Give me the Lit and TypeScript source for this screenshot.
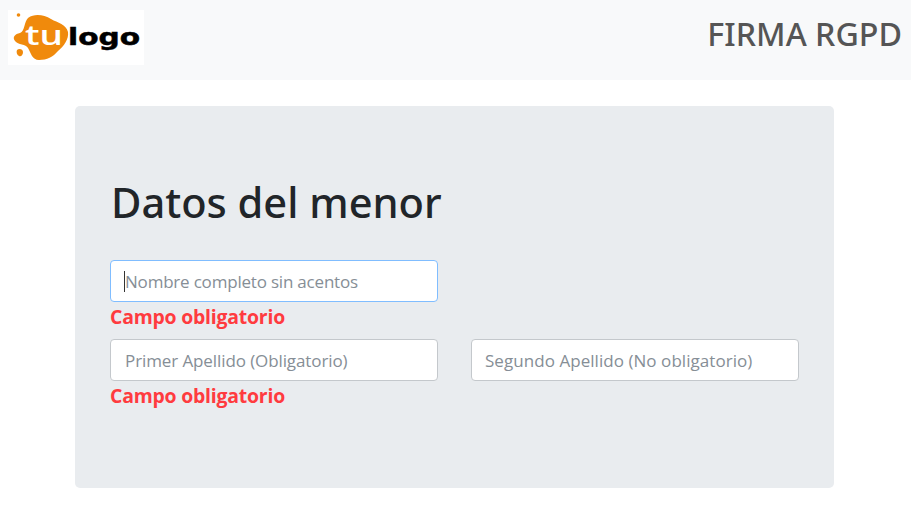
import { LitElement, html, css } from "lit";
import { customElement } from "lit/decorators.js";

@customElement("app-root")
export class AppRoot extends LitElement {
  static styles = css`
    :host { display: block; font-family: "Open Sans", "Noto Sans", sans-serif; background: #fff; min-height: 522px; color: #212529; }
    * { box-sizing: border-box; }
    .nav { height: 80px; background: #f8f9fa; display: flex; align-items: center; justify-content: space-between; padding: 0 9px 0 8px; }
    .logo { display: block; width: 136px; height: 55px; background: #fff; margin-top: -5px; }
    .brand { font-family: "Noto Sans", sans-serif; font-size: 32.2px; font-weight: 500; color: #555; margin: 0 0 11px; line-height: 1.2; }
    .jumbo { width: 759px; height: 382px; margin: 26px 0 0 75px; background: #e9ecef; border-radius: 5px; padding: 69px 35px 0; }
    h1 { font-family: "Noto Sans", sans-serif; margin: 0 0 31px 1px; font-size: 41.6px; font-weight: 500; line-height: 54px; }
    .row { display: grid; grid-template-columns: 328px 328px; column-gap: 33px; }
    .field { position: relative; height: 42px; }
    input { display: block; width: 100%; height: 42px; padding: 0 14px; font: 400 17px "Open Sans", sans-serif; letter-spacing: -0.2px; color: #495057; background: #fff; border: 1px solid #c4c8cc; border-radius: 4px; outline: none; }
    input.mid { letter-spacing: -0.1px; }
    input.wide { letter-spacing: 0.05px; padding-left: 13px; }
    input::placeholder { color: #868e96; opacity: 1; }
    input.focus { border-color: #80bdff; }
    .caret { position: absolute; left: 14px; top: 11px; width: 1px; height: 21px; background: #333; }
    .err { color: #ff3b3f; font-size: 19.4px; font-weight: 700; line-height: 30px; height: 37px; letter-spacing: -0.2px; }
    .tu { font-family: "Open Sans", sans-serif; font-weight: 600; }
    .lg { font-family: "DejaVu Sans", sans-serif; font-weight: 700; }
  `;

  render() {
    return html`
      <div class="nav">
        <svg class="logo" viewBox="0 0 136 55" role="img" aria-label="tu logo">
          <path fill="#f08a0c" d="M20 8 C27 3 36 5 43 9 C50 13 58 14 60 22 C61 29 56 36 50 41 C45 47 39 50 31 50 C24 50 23 43 20 38 C18 34 10 35 7 31 C4 27 7 24 12 23 C17 21 16 12 20 8 Z"/>
          <circle cx="10.5" cy="5" r="1.8" fill="#f08a0c"/>
          <path fill="#f08a0c" d="M9 40 C11 38 15 39 15 42 C15 45 13 47 11 46 C9 45 8 42 9 40 Z"/>
          <text class="tu" x="17" y="35" font-size="27" fill="#fff" textLength="38" lengthAdjust="spacingAndGlyphs">tu</text>
          <text class="lg" x="60" y="35" font-size="23" fill="#000" stroke="#000" stroke-width="0.5" textLength="72" lengthAdjust="spacingAndGlyphs">logo</text>
        </svg>
        <p class="brand">FIRMA RGPD</p>
      </div>
      <div class="jumbo">
        <h1>Datos del menor</h1>
        <div class="row">
          <div>
            <div class="field">
              <input class="focus" placeholder="Nombre completo sin acentos" />
              <span class="caret"></span>
            </div>
            <div class="err">Campo obligatorio</div>
          </div>
        </div>
        <div class="row">
          <div>
            <div class="field"><input class="mid" placeholder="Primer Apellido (Obligatorio)" /></div>
            <div class="err">Campo obligatorio</div>
          </div>
          <div>
            <div class="field"><input class="wide" placeholder="Segundo Apellido (No obligatorio)" /></div>
          </div>
        </div>
      </div>
    `;
  }
}
